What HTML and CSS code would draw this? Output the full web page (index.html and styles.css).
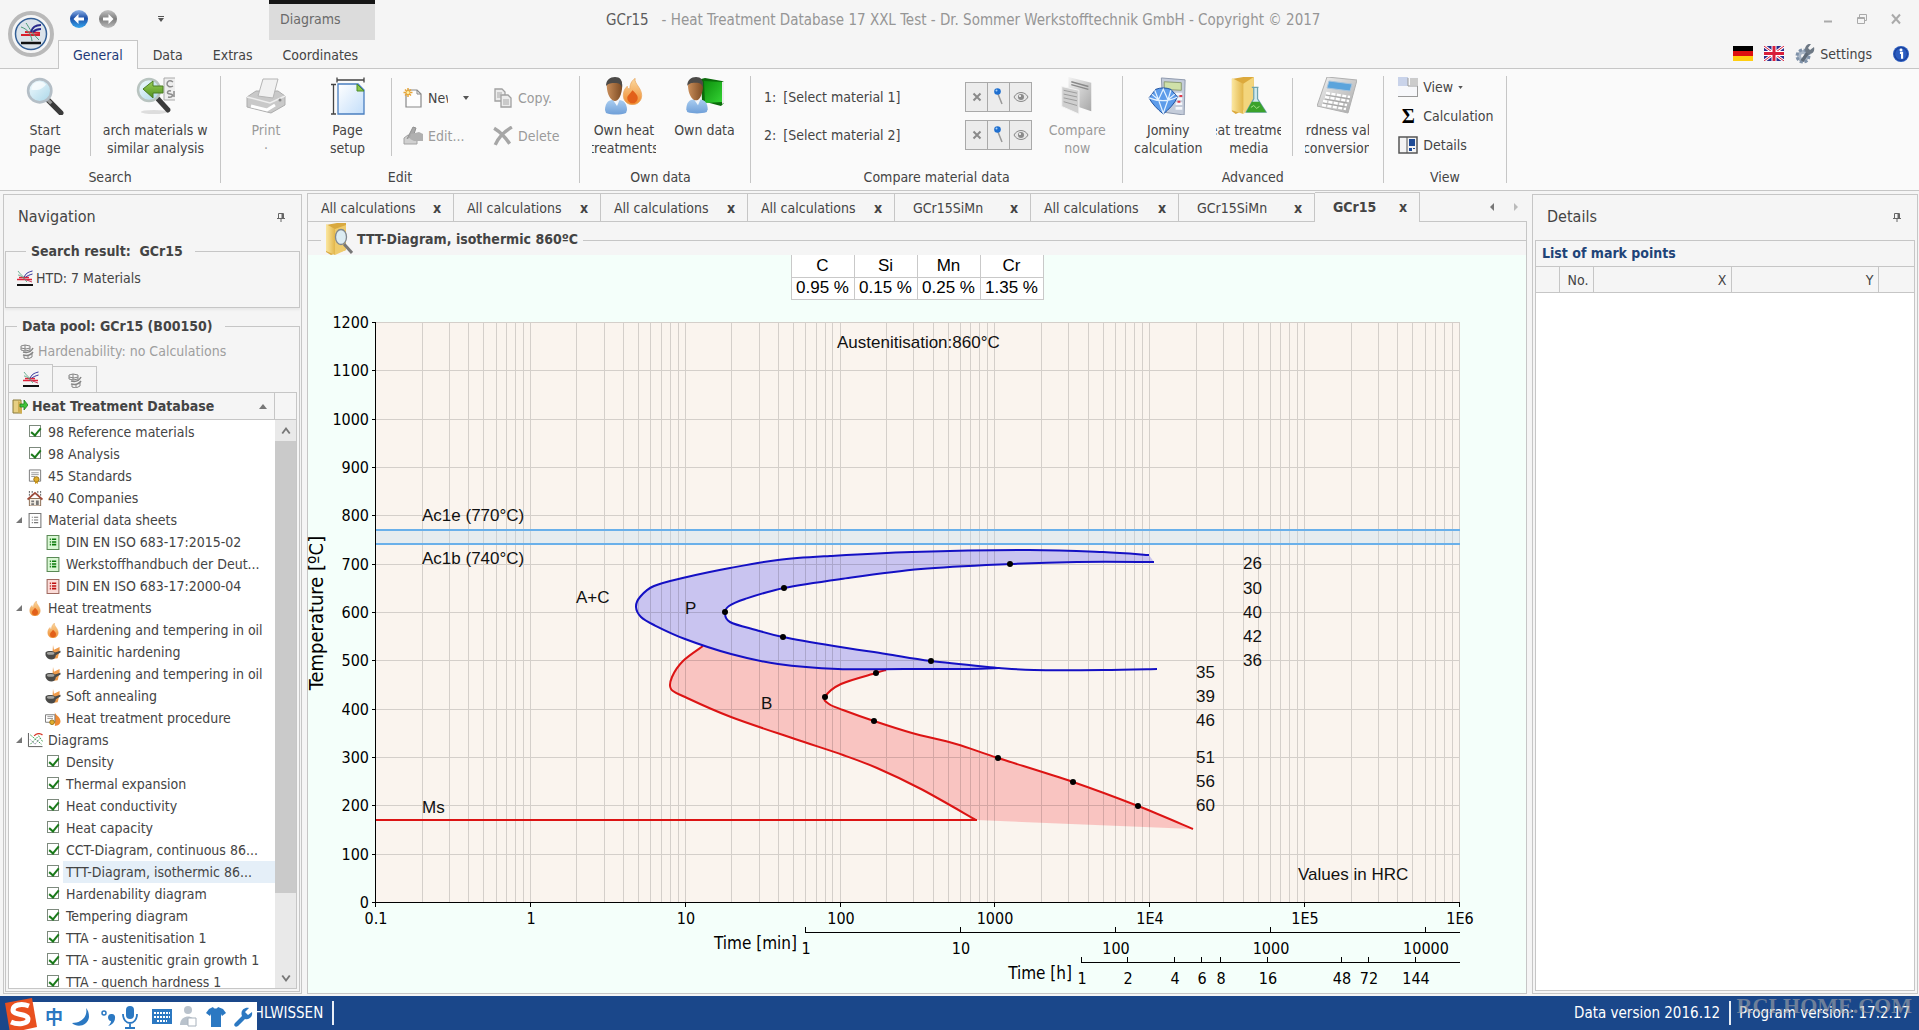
FILE: index.html
```html
<!DOCTYPE html>
<html lang="en">
<head>
<meta charset="utf-8">
<title>GCr15 - Heat Treatment Database 17 XXL Test</title>
<link rel="stylesheet" href="styles.css">
</head>
<body>
<svg class="sprite" aria-hidden="true">
  <defs>
    <linearGradient id="gBlue" x1="0" y1="0" x2="0" y2="1"><stop offset="0" stop-color="#8fb4e8"/><stop offset=".45" stop-color="#1d4fa8"/><stop offset="1" stop-color="#35a6ee"/></linearGradient>
    <linearGradient id="gGrey" x1="0" y1="0" x2="0" y2="1"><stop offset="0" stop-color="#c4c4c4"/><stop offset=".5" stop-color="#7d7d7d"/><stop offset="1" stop-color="#bdbdbd"/></linearGradient>
    <linearGradient id="gLens" x1="0" y1="0" x2="1" y2="1"><stop offset="0" stop-color="#f4fcff"/><stop offset="1" stop-color="#a9d6e8"/></linearGradient>
    <linearGradient id="gPage" x1="0" y1="0" x2="1" y2="1"><stop offset="0" stop-color="#ffffff"/><stop offset="1" stop-color="#c3defa"/></linearGradient>
    <linearGradient id="gFlame" x1="0" y1="0" x2="0" y2="1"><stop offset="0" stop-color="#fbd9a0"/><stop offset="1" stop-color="#f08a2c"/></linearGradient>
    <linearGradient id="gFace" x1="0" y1="0" x2="1" y2="0"><stop offset="0" stop-color="#c98e5a"/><stop offset="1" stop-color="#7c4a22"/></linearGradient>
    <linearGradient id="gShirt" x1="0" y1="0" x2="0" y2="1"><stop offset="0" stop-color="#a9cdf0"/><stop offset="1" stop-color="#6f9fd8"/></linearGradient>
    <linearGradient id="gBook" x1="0" y1="0" x2="1" y2="1"><stop offset="0" stop-color="#0c8f0c"/><stop offset="1" stop-color="#35d435"/></linearGradient>
    <linearGradient id="gFolder" x1="0" y1="0" x2="1" y2="0"><stop offset="0" stop-color="#fbe7a0"/><stop offset="1" stop-color="#e2b64a"/></linearGradient>
    <linearGradient id="gSteel" x1="0" y1="0" x2="1" y2="1"><stop offset="0" stop-color="#f2f2f2"/><stop offset="1" stop-color="#a8a8a8"/></linearGradient>
    <linearGradient id="gArrow" x1="0" y1="0" x2="0" y2="1"><stop offset="0" stop-color="#9bd05a"/><stop offset="1" stop-color="#4f8f1c"/></linearGradient>
  </defs>
  <symbol id="i-htd" viewBox="0 0 16 16"><rect x="0" y="14" width="16" height="2" fill="#111"/><path d="M0 9.500h15M2 7.500h10" stroke="#e0243c" stroke-width="1.300"/><path d="M1 1c2 3 5 5 8 9M1 5c3 0 6 4 9 7" stroke="#4aa07a" stroke-width=".8" fill="none"/><path d="M15.500 1C11 2 8 4 7.500 7M15.500 4C12 5 10 6 9 7" stroke="#33339c" fill="none"/><path d="M7 9l8 3" stroke="#c84060" fill="none"/></symbol>
  <symbol id="i-hard" viewBox="0 0 16 16"><g fill="none" stroke="#858585"><path d="M2 3l4-1 5 1v4l-5 1-4-1zM6 2v6M2 5l5 1 4-1"/><path d="M4 9c4 1 8 0 10-4M4 12c4 1 8 0 10-3" stroke-width="1.500"/><path d="M5 13v2l4 1 4-2v-3M9 13v3"/></g></symbol>
  <symbol id="i-lens" viewBox="0 0 36 36"><path d="M21 22l12 12" stroke="#3b3b3b" stroke-width="5" stroke-linecap="round"/><path d="M20 21l4 4" stroke="#9a9a9a" stroke-width="3"/><circle cx="13" cy="13" r="11" fill="url(#gLens)" stroke="#b4bec6" stroke-width="2.500"/><path d="M5 12a8 8 0 0 1 14-5c-4 5-8 6-14 5z" fill="#fff" opacity=".7"/></symbol>
  <symbol id="i-similar" viewBox="0 0 40 38"><ellipse cx="18" cy="35" rx="13" ry="2" fill="#ddd"/><path d="M39 1H28v22h11" fill="#eee" stroke="#aaa"/><path d="M37 5c-4-3-6 0-6 2s3 4 6 2M35 14c-4-1-5 3-1 3s3 4-2 3M38 14v6" stroke="#8c8c8c" stroke-width="1.500" fill="none"/><path d="M22 22l10 11" stroke="#3b3b3b" stroke-width="5" stroke-linecap="round"/><circle cx="13" cy="13" r="11" fill="url(#gLens)" stroke="#b9c4c0" stroke-width="2.500"/><path d="M7 12l10-8v5h10v7H17v5z" fill="url(#gArrow)" stroke="#4a7d22"/></symbol>
  <symbol id="i-print" viewBox="0 0 40 36"><path d="M1 19l9-6h22l7 5v9l-14 8L1 29z" fill="#c9c9c9" stroke="#adadad"/><path d="M1 19l23 6 15-7" stroke="#eee" fill="none" stroke-width="1.500"/><path d="M12 18L17 1h15l-5 19z" fill="#f1f1f1" stroke="#b5b5b5"/><path d="M5 28l16 4 8-5" stroke="#fff" stroke-width="3" fill="none"/><circle cx="34" cy="22" r="1.500" fill="#888"/></symbol>
  <symbol id="i-setup" viewBox="0 0 34 38"><path d="M6 3h27M6 .500v5M33 .500v5M2.500 7v30M0 7.500h5M0 37h5" stroke="#444" stroke-width="1.300"/><path d="M7 7h20l6 6v24H7z" fill="url(#gPage)" stroke="#4a7fc0" stroke-width="1.300"/><path d="M26 7v7h7z" fill="#8dc84a" stroke="#4a8a2a"/></symbol>
  <symbol id="i-new" viewBox="0 0 18 20"><path d="M4 2h9l4 4v13H2V6z" fill="#fdfdfd" stroke="#888" stroke-width="1.200"/><path d="M13 2v4h4" fill="none" stroke="#888"/><path d="M4 0v9M-.500 4.500h9M1 1.500l6 6M7 1.500l-6 6" stroke="#e8a63a" stroke-width="1.500"/><circle cx="4" cy="4.500" r="1.500" fill="#fff2a8"/></symbol>
  <symbol id="i-copy" viewBox="0 0 18 20"><g fill="#ececec" stroke="#a0a0a0" stroke-width="1.300"><path d="M1 1h7l3 3v9H1z"/><path d="M7 7h7l3 3v9H7z"/></g><path d="M3 5h5M3 7h4M3 9h4M9 12h6M9 14h6M9 16h6" stroke="#a8a8a8"/></symbol>
  <symbol id="i-edit" viewBox="0 0 20 20"><path d="M1 12l4-3 9 2v7H1z" fill="#d0d0d0" stroke="#a2a2a2"/><path d="M4 13L10 1l3 1-3 9" fill="#a8a8a8" stroke="#909090"/><path d="M8 8l8-2 4 2v7h-9l-4-2z" fill="#b0b0b0"/></symbol>
  <symbol id="i-del" viewBox="0 0 18 18"><path d="M1 2c5 3 10 8 14 14M17 1C10 5 5 10 2 17" stroke="#a6a6a6" stroke-width="3" fill="none"/></symbol>
  <symbol id="i-person" viewBox="0 0 24 38"><path d="M1 33c0-6 3-10 7-10h7c5 0 8 4 8 10l-1 3c-6 2-14 2-20 0z" fill="url(#gShirt)"/><path d="M9 23l4 6 3-7z" fill="#f2f6fb"/><path d="M3 12C2 5 5 1 11 1s8 4 7 11c-1 8-4 12-7 12s-7-4-8-12z" fill="url(#gFace)"/><path d="M2 9C2 3 6 0 11 0c5 0 8 3 7 11-1-4-3-5-7-5-4 0-6 0-9 3z" fill="#4c4a48"/></symbol>
  <symbol id="i-ownheat" viewBox="0 0 40 38"><use href="#i-person" width="24" height="38"/><use href="#i-flame" x="18" y="1" width="21" height="27"/></symbol>
  <symbol id="i-owndata" viewBox="0 0 40 38"><path d="M16 2l4-1 17 3 2 1v21l-3 3-19-5z" fill="#0a6b0a"/><path d="M19 4l18 1v20l-17 1z" fill="url(#gBook)"/><path d="M37 5l2 0v21l-2 1z" fill="#eee"/><use href="#i-person" width="24" height="37"/></symbol>
  <symbol id="i-flame" viewBox="0 0 16 20"><path d="M10 0c-1 4 5 7 5 13 0 4-3 7-7 7s-7-3-7-7c0-3 1-5 3-7 0 2 1 2 2 2 0-3 1-6 4-8z" fill="url(#gFlame)" stroke="#e9a862" stroke-width=".6"/><path d="M8 9c3 3 4 4 4 6a4 4 0 0 1-8 0c0-2 2-3 4-6z" fill="#e2601a"/></symbol>
  <symbol id="i-x" viewBox="0 0 10 10"><path d="M1.500 1.500l7 7M8.500 1.500l-7 7" stroke="#8a8a8a" stroke-width="2"/></symbol>
  <symbol id="i-pin" viewBox="0 0 10 18"><path d="M4 6l4 10" stroke="#999" stroke-width="1.500"/><circle cx="3.500" cy="3.500" r="3.300" fill="#1f6fd0"/><circle cx="2.500" cy="2.500" r="1" fill="#a8d0f8"/></symbol>
  <symbol id="i-eye" viewBox="0 0 16 12"><path d="M1 6c3-6 11-6 14 0-3 6-11 6-14 0z" fill="#e6e6e6" stroke="#8a8a8a"/><circle cx="8" cy="6" r="3" fill="#8a8a8a"/><circle cx="7" cy="5" r="1" fill="#fff"/></symbol>
  <symbol id="i-compare" viewBox="0 0 32 40"><path d="M7 0l24 6v30L7 28z" fill="url(#gSteel)"/><path d="M10 5l18 5M10 8l18 5" stroke="#8a8a8a" stroke-width="1.500"/><path d="M0 10l18 4v25L0 31z" fill="#cfcfcf" stroke="#f4f4f4"/><path d="M2 14l14 3M2 18l14 3M2 22l14 3M2 26l14 4" stroke="#9a9a9a"/></symbol>
  <symbol id="i-jominy" viewBox="0 0 40 40"><path d="M13 1l25 2-1 37-22-3z" fill="#c4ccda" stroke="#8c97ab"/><path d="M16 5l18 1v8l-18-1z" fill="#cfe0a8" stroke="#8a9a70"/><path d="M28 18h7M28 23h7M28 28h7M28 33h7" stroke="#f5f7fb" stroke-width="3"/><path d="M32 20h3M30 26h3" stroke="#e03a4a" stroke-width="2"/><path d="M7 13c5-2 11-2 16 0l7 8c-3 7-9 13-15 18C9 34 3 28 0 22z" fill="#5d9cea" stroke="#1c4f9e"/><path d="M0 22c9 4 21 4 30-1M6 14l4 10 5-11 5 11 3-10M3 18l7 6M27 18l-7 6M10 24l5 14 5-14" stroke="#e4f2ff" stroke-width="1.300" fill="none"/></symbol>
  <symbol id="i-media" viewBox="0 0 38 40"><path d="M1 2L13 0h11v30L5 39 1 36z" fill="#dca93c"/><path d="M1 1l12 6v32L1 35z" fill="url(#gFolder)"/><path d="M13 7l11-7v30l-11 9z" fill="#f3d57c"/><path d="M22 11h7M24 11v12L16 37h21L28 23V11" fill="#cfeaf0" stroke="#6fa3ad" stroke-width="1.300"/><path d="M22 26h8l7 11H16z" fill="#3aa22a"/><path d="M21 32l3-2 3 3 3-2" stroke="#a6e48c" fill="none"/></symbol>
  <symbol id="i-calc" viewBox="0 0 40 38"><path d="M10 0l30 3-9 33L0 29z" fill="url(#gSteel)" stroke="#b0b0b0"/><path d="M12 4l23 3-2 7-23-3z" fill="#5ba4dc" stroke="#a8c4dc"/><path d="M9 16l24 4M8 20l24 4M6 24l24 4M5 28l24 4" stroke="#fff" stroke-width="2.500" stroke-dasharray="4 1.500"/><path d="M9 18l24 4M8 22l22 4M6 26l22 4" stroke="#9b9b9b" stroke-width=".8"/></symbol>
  <symbol id="i-view" viewBox="0 0 20 20"><path d="M0 0h20v20H0z" fill="#f7f8fb"/><path d="M0 0h10v9H0z" fill="#c9d3ea"/><path d="M10 1v8h10M0 19.500h20M19.500 9v11" stroke="#999" fill="none"/><path d="M12 1h8v7h-8z" fill="#ccc"/></symbol>
  <symbol id="i-panel" viewBox="0 0 20 18"><path d="M1 1h18v16H1z" fill="#f4f4f4" stroke="#555" stroke-width="1.500"/><path d="M9 1v16" stroke="#555"/><path d="M11 3h6v7h-6zM11 12h3v3h-3zM15 12h2v1h-2z" fill="#1f4b96"/></symbol>
  <symbol id="i-back" viewBox="0 0 18 18"><circle cx="9" cy="9" r="9" fill="url(#gBlue)"/><path d="M3.500 9l5-5v3.500H14v3H8.500V14z" fill="#fff"/></symbol>
  <symbol id="i-fwd" viewBox="0 0 18 18"><circle cx="9" cy="9" r="9" fill="url(#gGrey)"/><path d="M14.500 9l-5-5v3.500H4v3h5.500V14z" fill="#fff"/></symbol>
  <symbol id="i-tri" viewBox="0 0 6 4"><path d="M0 0h6L3 4z" fill="#555"/></symbol>
  <symbol id="i-custom" viewBox="0 0 6 6"><path d="M0 0h6v1H0zM0 2h6L3 6z" fill="#555"/></symbol>
  <symbol id="i-de" viewBox="0 0 20 15"><path d="M0 0h20v5H0z"/><path d="M0 5h20v5H0z" fill="#dd1010"/><path d="M0 10h20v5H0z" fill="#ffce10"/></symbol>
  <symbol id="i-uk" viewBox="0 0 20 15"><path d="M0 0h20v15H0z" fill="#2b2d8c"/><path d="M0 0l20 15M20 0L0 15" stroke="#fff" stroke-width="3"/><path d="M0 0l20 15M20 0L0 15" stroke="#d81e3a"/><path d="M10 0v15M0 7.500h20" stroke="#fff" stroke-width="5"/><path d="M10 0v15M0 7.500h20" stroke="#d81e3a" stroke-width="3"/></symbol>
  <symbol id="i-gear" viewBox="0 0 20 20"><circle cx="8" cy="12" r="6" fill="#a9b6c6" stroke="#7f92a9" stroke-width="3" stroke-dasharray="3 1.700"/><circle cx="8" cy="12" r="2" fill="#f5f5f5"/><path d="M7 17L14 7" stroke="#5f6b78" stroke-width="3.500"/><path d="M10 5c0-3 3-6 6-5l-3 4 2 2 4-3c1 4-1 7-4 7-3 0-5-2-5-5z" fill="#6d7884"/></symbol>
  <symbol id="i-info" viewBox="0 0 15 15"><circle cx="7.500" cy="7.500" r="7.500" fill="#2a5cc0"/><circle cx="7.500" cy="7.500" r="6" fill="none" stroke="#1a3f98"/><circle cx="7.500" cy="3.800" r="1.400" fill="#fff"/><path d="M6.500 6.500h2v5.500" stroke="#fff" stroke-width="2" fill="none"/></symbol>
  <symbol id="i-push" viewBox="0 0 8 9"><path d="M1.500.500h5v5h-5zM0 5.500h8M4 6v3" stroke="#666" fill="none"/><path d="M4.500 1h2v4h-2z" fill="#666"/></symbol>
  <symbol id="i-db" viewBox="0 0 16 16"><path d="M1 2h8v13H1z" fill="#e7cf82" stroke="#8a7a3a"/><path d="M6 3l4 2v11l-4-2z" fill="#cfae52"/><path d="M8 6h4V2l4 5-4 5V9H8z" fill="#3fc43a" stroke="#1f7d1f" stroke-width=".8"/></symbol>
  <symbol id="i-std" viewBox="0 0 14 16"><path d="M1 1h12v12H1z" fill="#fdfdfd" stroke="#777"/><path d="M3 4h8M3 6h8M3 8h4" stroke="#999"/><circle cx="8.500" cy="11" r="2.800" fill="#e0ad2c" stroke="#9a7314"/><path d="M7 13v3l1.500-1L10 16v-3z" fill="#c9951c"/></symbol>
  <symbol id="i-comp" viewBox="0 0 16 16"><path d="M2 8h12v8H2z" fill="#f4efe6" stroke="#8a6a50"/><path d="M0 9l8-7 8 7" stroke="#a04a38" stroke-width="2" fill="none"/><path d="M2 0v6M5 0v4M11 0v4M14 0v6" stroke="#555" stroke-dasharray="2 1"/><path d="M4 10h3v2H4zM9 10h3v5H9zM4 13h3v2H4z" fill="#777"/></symbol>
  <symbol id="i-sheet" viewBox="0 0 12 14"><path d="M.500.500h11v13H.500z" fill="#fff" stroke="#777"/><path d="M3 4h1M5 4h4M3 6.500h1M5 6.500h4M3 9h1M5 9h4" stroke="#777"/></symbol>
  <symbol id="i-sheetg" viewBox="0 0 12 14"><path d="M.500.500h11v13H.500z" fill="#d9f7d4" stroke="#5a8a55"/><path d="M3 4h1M5 4h4M3 6.500h1M5 6.500h4M3 9h1M5 9h4" stroke="#0a7a0a" stroke-width="1.500"/></symbol>
  <symbol id="i-sheetr" viewBox="0 0 12 14"><path d="M.500.500h11v13H.500z" fill="#fbdcd8" stroke="#a06a60"/><path d="M3 4h1M5 4h4M3 6.500h1M5 6.500h4M3 9h1M5 9h4" stroke="#c01010" stroke-width="1.500"/></symbol>
  <symbol id="i-pot" viewBox="0 0 16 16"><path d="M8 0l1 5 6-3v4l-2 8-6 1z" fill="#ee9a4a"/><path d="M0 8c2-2 8-2 10 0l6-2v2l-5 3c0 6-9 6-11 0z" fill="#4a4a48"/><ellipse cx="5.500" cy="9" rx="4" ry="1.500" fill="#a4a4a0"/></symbol>
  <symbol id="i-proc" viewBox="0 0 16 16"><path d="M10 1c0 3 6 5 6 10 0 3-3 5-6 5z" fill="#ee8a34"/><path d="M0 4h10v8H0z" fill="#fff" stroke="#777"/><path d="M2 6h6M2 8h6" stroke="#999"/><circle cx="7" cy="12" r="2.500" fill="#e0ad2c" stroke="#9a7314"/></symbol>
  <symbol id="i-diag" viewBox="0 0 16 16"><path d="M1 0v14.500h15" stroke="#555" fill="none"/><path d="M7 3c3-3 6-3 9-1" stroke="#d83a2a" fill="none" stroke-width="1.300"/><path d="M3 2l12 10M3 12l9-9 4 6" stroke="#3b9a4a" fill="none" stroke-dasharray="2 1"/><path d="M3 7l5 5 5-6" stroke="#557" fill="none" stroke-dasharray="1 1"/></symbol>
  <symbol id="i-exp" viewBox="0 0 6 6"><path d="M6 0v6H0z" fill="#777"/></symbol>
  <symbol id="i-sort" viewBox="0 0 8 5"><path d="M4 0l4 5H0z" fill="#777"/></symbol>
  <symbol id="i-chev" viewBox="0 0 8 8"><path d="M1 6l3-4 3 4" stroke="#777" stroke-width="1.500" fill="none"/></symbol>
  <symbol id="i-chevd" viewBox="0 0 8 8"><path d="M1 2l3 4 3-4" stroke="#777" stroke-width="1.500" fill="none"/></symbol>
  <symbol id="i-folder" viewBox="0 0 28 32"><path d="M1 2L12 0h9v27L6 32l-5-3z" fill="#d9a93f"/><path d="M1 1l9 5v26l-9-4z" fill="url(#gFolder)"/><path d="M10 6l11-4v25l-11 5z" fill="#eecb6c"/><path d="M19 21l8 9" stroke="#777" stroke-width="3"/><ellipse cx="16" cy="14" rx="5.500" ry="7.500" fill="#dcecf2" stroke="#808890" stroke-width="1.300"/></symbol>
</svg>

<header class="top">
  <button class="logo" aria-label="Application menu">
    <svg viewBox="0 0 46 46"><circle cx="23" cy="23" r="21" fill="#f6f6f6" stroke="#b9b9b9" stroke-width="4"/><circle cx="23" cy="23" r="15.500" fill="#dbe3ea" stroke="#335f96" stroke-width="1.500"/><path d="M13 32h20" stroke="#111" stroke-width="2.500"/><path d="M13 24h19M17 21l15 1" stroke="#d81e2e" stroke-width="2.200"/><path d="M13 16c6 2 10 6 11 14M18 12c3 4 4 8 13 17" stroke="#4a9a78" fill="none"/><path d="M33 14c-7 0-9 3-10 7M33 18c-4 0-6 1-8 3" stroke="#29298c" stroke-width="2" fill="none"/></svg>
  </button>
  <div class="titlebar">
    <div class="quick">
      <button aria-label="Back"><svg class="s18"><use href="#i-back"/></svg></button>
      <button aria-label="Forward"><svg class="s18"><use href="#i-fwd"/></svg></button>
      <button class="customize" aria-label="Customize toolbar"><svg class="s6"><use href="#i-custom"/></svg></button>
    </div>
    <div class="context">Diagrams</div>
    <h1><span class="doc">GCr15</span>- Heat Treatment Database 17 XXL Test - Dr. Sommer Werkstofftechnik GmbH - Copyright © 2017</h1>
    <div class="winctl">
      <button aria-label="Minimize"><svg viewBox="0 0 12 12"><path d="M2 8.500h8" stroke="#aaa" stroke-width="2"/></svg></button>
      <button aria-label="Restore"><svg viewBox="0 0 12 12"><path d="M3.500 4V1.500h7v6H8.500M1.500 4.500h7v6h-7zM1 5.500h7" stroke="#aaa" fill="none"/></svg></button>
      <button aria-label="Close"><svg viewBox="0 0 12 12"><path d="M2 1.500l8 9M10 1.500l-8 9" stroke="#aaa" stroke-width="2"/></svg></button>
    </div>
  </div>
  <div class="tabrow">
    <nav class="tabs">
      <button class="tab on">General</button><button class="tab">Data</button><button class="tab">Extras</button><button class="tab">Coordinates</button>
    </nav>
    <div class="tools">
      <button aria-label="Deutsch"><svg class="flag"><use href="#i-de"/></svg></button>
      <button aria-label="English"><svg class="flag"><use href="#i-uk"/></svg></button>
      <button class="settings"><svg class="s20"><use href="#i-gear"/></svg>Settings</button>
      <button aria-label="Info"><svg class="s16"><use href="#i-info"/></svg></button>
    </div>
  </div>
</header>

<section class="ribbon">
  <div class="group">
    <div class="items">
      <button class="big w90"><svg><use href="#i-lens"/></svg><span>Start</span><span>page</span></button>
      <i class="sep"></i>
      <button class="big w128"><svg><use href="#i-similar"/></svg><span>Search materials with</span><span>similar analysis</span></button>
    </div>
    <h2>Search</h2>
  </div>
  <div class="group">
    <div class="items">
      <button class="big w90 off" disabled><svg><use href="#i-print"/></svg><span>Print</span><span>·</span></button>
      <button class="big w72"><svg><use href="#i-setup"/></svg><span>Page</span><span>setup</span></button>
      <i class="sep gapl"></i>
      <div class="smallgrid">
        <button class="small"><svg><use href="#i-new"/></svg><span class="cut">New</span><svg class="s6"><use href="#i-tri"/></svg></button>
        <button class="small off" disabled><svg><use href="#i-copy"/></svg>Copy.</button>
        <button class="small off" disabled><svg><use href="#i-edit"/></svg>Edit...</button>
        <button class="small off" disabled><svg><use href="#i-del"/></svg>Delete</button>
      </div>
    </div>
    <h2>Edit</h2>
  </div>
  <div class="group own">
    <div class="items">
      <button class="big w88"><svg><use href="#i-ownheat"/></svg><span>Own heat</span><span>treatments</span></button>
      <button class="big w72"><svg><use href="#i-owndata"/></svg><span>Own data</span></button>
    </div>
    <h2>Own data</h2>
  </div>
  <div class="group">
    <div class="items">
      <div class="picks">
        <div class="pick"><span>1:</span><span class="sel">[Select material 1]</span><div class="seg"><button aria-label="Clear material 1"><svg class="s10"><use href="#i-x"/></svg></button><button aria-label="Pin material 1"><svg class="pinic"><use href="#i-pin"/></svg></button><button aria-label="Show material 1"><svg class="s16"><use href="#i-eye"/></svg></button></div></div>
        <div class="pick"><span>2:</span><span class="sel">[Select material 2]</span><div class="seg"><button aria-label="Clear material 2"><svg class="s10"><use href="#i-x"/></svg></button><button aria-label="Pin material 2"><svg class="pinic"><use href="#i-pin"/></svg></button><button aria-label="Show material 2"><svg class="s16"><use href="#i-eye"/></svg></button></div></div>
      </div>
      <button class="big w90 off" disabled><svg><use href="#i-compare"/></svg><span>Compare</span><span>now</span></button>
    </div>
    <h2>Compare material data</h2>
  </div>
  <div class="group adv">
    <div class="items">
      <button class="big w88 roomy"><svg><use href="#i-jominy"/></svg><span>Jominy</span><span>calculation</span></button>
      <button class="big w72"><svg><use href="#i-media"/></svg><span>Heat treatment</span><span>media</span></button>
      <i class="sep gapl"></i>
      <button class="big w88"><svg><use href="#i-calc"/></svg><span>Hardness value</span><span>conversion</span></button>
    </div>
    <h2>Advanced</h2>
  </div>
  <div class="group">
    <div class="items stack">
      <button class="small"><svg><use href="#i-view"/></svg>View<svg class="s5"><use href="#i-tri"/></svg></button>
      <button class="small"><b class="sigma">Σ</b>Calculation</button>
      <button class="small"><svg><use href="#i-panel"/></svg>Details</button>
    </div>
    <h2>View</h2>
  </div>
</section>

<main>
  <aside class="panel nav">
    <div class="phead"><h2>Navigation</h2><button aria-label="Auto hide"><svg class="push"><use href="#i-push"/></svg></button></div>
    <fieldset class="result">
      <legend>Search result:&nbsp; GCr15</legend>
      <a href="#materials"><svg class="s16"><use href="#i-htd"/></svg>HTD: 7 Materials</a>
    </fieldset>
    <fieldset class="pool">
      <legend>Data pool: GCr15 (B00150)</legend>
      <div class="hardn"><svg class="s16"><use href="#i-hard"/></svg>Hardenability: no Calculations</div>
      <div class="ptabs"><button class="on" aria-label="Heat Treatment Database"><svg class="s16"><use href="#i-htd"/></svg></button><button aria-label="Hardenability"><svg class="s16"><use href="#i-hard"/></svg></button></div>
      <div class="treehead"><button><svg class="s16"><use href="#i-db"/></svg>Heat Treatment Database<svg class="sort"><use href="#i-sort"/></svg></button><span></span></div>
      <div class="treebox">
        <ul class="tree">
          <li><label><input type="checkbox" checked>98 Reference materials</label></li>
          <li><label><input type="checkbox" checked>98 Analysis</label></li>
          <li><svg class="s16"><use href="#i-std"/></svg>45 Standards</li>
          <li><svg class="s16"><use href="#i-comp"/></svg>40 Companies</li>
          <li class="open"><svg class="s6"><use href="#i-exp"/></svg><svg class="s16"><use href="#i-sheet"/></svg>Material data sheets</li>
          <li class="sub"><svg class="s16"><use href="#i-sheetg"/></svg>DIN EN ISO 683-17:2015-02</li>
          <li class="sub"><svg class="s16"><use href="#i-sheetg"/></svg>Werkstoffhandbuch der Deut...</li>
          <li class="sub"><svg class="s16"><use href="#i-sheetr"/></svg>DIN EN ISO 683-17:2000-04</li>
          <li class="open"><svg class="s6"><use href="#i-exp"/></svg><svg class="s16"><use href="#i-flame"/></svg>Heat treatments</li>
          <li class="sub"><svg class="s16"><use href="#i-flame"/></svg>Hardening and tempering in oil</li>
          <li class="sub"><svg class="s16"><use href="#i-pot"/></svg>Bainitic hardening</li>
          <li class="sub"><svg class="s16"><use href="#i-pot"/></svg>Hardening and tempering in oil</li>
          <li class="sub"><svg class="s16"><use href="#i-pot"/></svg>Soft annealing</li>
          <li class="sub"><svg class="s16"><use href="#i-proc"/></svg>Heat treatment procedure</li>
          <li class="open"><svg class="s6"><use href="#i-exp"/></svg><svg class="s16"><use href="#i-diag"/></svg>Diagrams</li>
          <li class="sub"><label><input type="checkbox" checked>Density</label></li>
          <li class="sub"><label><input type="checkbox" checked>Thermal expansion</label></li>
          <li class="sub"><label><input type="checkbox" checked>Heat conductivity</label></li>
          <li class="sub"><label><input type="checkbox" checked>Heat capacity</label></li>
          <li class="sub"><label><input type="checkbox" checked>CCT-Diagram, continuous 86...</label></li>
          <li class="sub current"><label><input type="checkbox" checked>TTT-Diagram, isothermic 86...</label></li>
          <li class="sub"><label><input type="checkbox" checked>Hardenability diagram</label></li>
          <li class="sub"><label><input type="checkbox" checked>Tempering diagram</label></li>
          <li class="sub"><label><input type="checkbox" checked>TTA - austenitisation 1</label></li>
          <li class="sub"><label><input type="checkbox" checked>TTA - austenitic grain growth 1</label></li>
          <li class="sub"><label><input type="checkbox" checked>TTA - quench hardness 1</label></li>
        </ul>
        <div class="scroll"><button aria-label="Scroll up"><svg class="s8"><use href="#i-chev"/></svg></button><div class="rail"><div class="thumb"></div></div><button aria-label="Scroll down"><svg class="s8"><use href="#i-chevd"/></svg></button></div>
      </div>
    </fieldset>
  </aside>

  <section class="work">
    <nav class="docs">
      <button>All calculations<b>x</b></button><button>All calculations<b>x</b></button><button>All calculations<b>x</b></button><button>All calculations<b>x</b></button><button class="name">GCr15SiMn<b>x</b></button><button>All calculations<b>x</b></button><button class="name">GCr15SiMn<b>x</b></button><button class="on">GCr15<b>x</b></button>
      <span class="pager"><svg viewBox="0 0 4 8"><path d="M4 0v8L0 4z" fill="#777"/></svg><svg viewBox="0 0 4 8"><path d="M0 0v8l4-4z" fill="#bbb"/></svg></span>
    </nav>
    <div class="sheet">
      <div class="caption"><svg><use href="#i-folder"/></svg><h2>TTT-Diagram, isothermic 860ºC</h2></div>
      <div class="diagram">
        <table class="analysis">
          <thead><tr><th>C</th><th>Si</th><th>Mn</th><th>Cr</th></tr></thead>
          <tbody><tr><td>0.95 %</td><td>0.15 %</td><td>0.25 %</td><td>1.35 %</td></tr></tbody>
        </table>
        <svg id="chart" viewBox="0 0 1218 690" preserveAspectRatio="xMidYMin meet" role="img" aria-label="TTT diagram"></svg>
      </div>
    </div>
  </section>

  <aside class="panel details">
    <div class="phead"><h2>Details</h2><button aria-label="Auto hide"><svg class="push"><use href="#i-push"/></svg></button></div>
    <div class="marks">
      <h3>List of mark points</h3>
      <table>
        <colgroup><col class="c1"><col class="c2"><col class="c3"><col><col class="c5"></colgroup>
        <thead><tr><th></th><th>No.</th><th>X</th><th>Y</th><th></th></tr></thead>
      </table>
    </div>
  </aside>
</main>

<footer>
  <span class="owner">STAHLWISSEN</span>
  <span class="ver">Data version 2016.12</span><span class="ver">Program version: 17.2.17</span>
  <div class="ime">
    <svg viewBox="0 0 224 32" aria-hidden="true">
      <g fill="#2b78c2" stroke="none">
        <path d="M22 8c2 8-4 15-14 15 5 5 16 3 17-6 0-4-1-7-3-9z"/>
        <path d="M44 17a3.500 3.500 0 0 1 7 1c0 4-3 7-7 8 2-2 3-3 3-5-2 0-3-2-3-4z"/>
        <rect x="62" y="6" width="8" height="13" rx="4"/><path d="M88 9h20v15H88z"/>
        <path d="M149 8l4-2c1 2 4 2 5 0l5 2 3 4-4 3-1-2v13h-10V13l-1 2-4-3z" transform="translate(-4 1)"/>
        <path d="M172 23l7-7c-2-5 2-9 7-8l-4 4 3 3 4-3c1 5-3 8-7 7l-7 7c-3 2-5-1-3-3z" transform="translate(-1 0)"/>
      </g>
      <path d="M59 14c0 12 14 12 14 0M66 23v5M61 28h10" stroke="#2b78c2" stroke-width="1.800" fill="none"/>
      <circle cx="40" cy="13" r="2" fill="none" stroke="#2b78c2" stroke-width="1.500"/>
      <path d="M90 13h16M90 17h16M93 21h10" stroke="#fff" stroke-width="2" stroke-dasharray="2 1"/>
      <g fill="#b9c2cc"><circle cx="124" cy="10" r="4"/><path d="M116 25c0-11 15-11 15-2v2z"/></g><path d="M124 18h8v8h-8z" fill="#fff" stroke="#a8b2bd"/>
    </svg>
    <span class="zh">中</span>
    <svg class="sogou" viewBox="0 0 34 34" aria-hidden="true"><path d="M2 5L29 0l5 29-27 6z" fill="#e9501f"/><path d="M26 8c-8-3-16-1-16 4 0 6 15 3 15 9 0 5-10 6-17 3" stroke="#fff" stroke-width="5" fill="none"/></svg>
  </div>
  <div class="mark">RCLHOME.COM</div>
</footer>
<script src="chart.js"></script>
</body>
</html>
```
FILE: styles.css
```css
* { box-sizing: border-box; }
html, body { height: 100%; }
body {
  margin: 0; display: flex; flex-direction: column; min-height: 100vh; overflow: hidden;
  background: #f5f5f5; color: #444;
  font: 14px/18px "DejaVu Sans Condensed", "DejaVu Sans", sans-serif; font-stretch: condensed;
}
button { font: inherit; color: inherit; background: none; border: 0; padding: 0; margin: 0; display: flex; align-items: center; }
h1, h2, h3 { margin: 0; font: inherit; }
svg { display: block; flex: none; overflow: visible; }
.sprite { position: absolute; width: 0; height: 0; }
.s5 { width: 5px; height: 3px; } .s6 { width: 6px; height: 6px; } .s8 { width: 10px; height: 10px; }
.s10 { width: 10px; height: 10px; } .s16 { width: 16px; height: 16px; } .s18 { width: 18px; height: 18px; }
.s20 { width: 20px; height: 20px; } .flag { width: 20px; height: 15px; } .pinic { width: 10px; height: 18px; }
.push { width: 8px; height: 9px; }

/* title bar and ribbon tabs */
.top { position: relative; flex: none; height: 69px; border-bottom: 1px solid #c6c6c6; }
.logo { position: absolute; left: 8px; top: 11px; width: 46px; height: 46px; z-index: 1; }
.logo svg { width: 46px; height: 46px; }
.titlebar { display: grid; grid-template-columns: 269px 106px 1fr auto; height: 40px; align-items: start; }
.quick { display: flex; align-items: center; gap: 11px; height: 38px; padding-left: 70px; }
.customize { margin-left: 30px; }
.context { height: 40px; border-top: 4px solid #161616; background: #dcdcdc; color: #6a6a6a; padding: 6px 11px; }
.titlebar h1 { color: #969696; font-size: 15px; line-height: 40px; padding-left: 231px; white-space: nowrap; }
.doc { color: #5c5c5c; margin-right: 13px; }
.winctl { display: flex; gap: 22px; padding: 13px 17px 0 0; }
.winctl svg { width: 12px; height: 12px; }
.tabrow { display: flex; justify-content: space-between; height: 29px; padding-left: 58px; }
.tabs { display: flex; }
.tab { height: 29px; padding: 0 14px; justify-content: center; border: 1px solid transparent; border-bottom: 0; }
.tab.on { background: #fafafa; border-color: #c6c6c6; color: #1f3a78; min-width: 79px; }
.tools { display: flex; gap: 11px; align-items: center; padding: 0 10px 2px 0; }
.settings { gap: 5px; margin-right: 10px; }

.ribbon { flex: none; display: flex; height: 122px; background: #fafafa; border-bottom: 1px solid #c6c6c6; padding: 7px 0; }
.group { display: flex; flex-direction: column; justify-content: space-between; border-right: 1px solid #c6c6c6; height: 107px; }
.group h2 { text-align: center; line-height: 12px; }
.own { padding-right: 9px; }
.adv { padding: 0 2px 0 1px; }
.items { display: flex; height: 81px; }
.sep { width: 1px; height: 78px; margin-top: 2px; background: #c6c6c6; }
.gapl { margin-left: 7px; }
.big { display: flex; flex-direction: column; padding: 1px 12px 0; }
.w72 { width: 73px; padding: 1px 4px 0; } .w88 { width: 88px; } .w90 { width: 90px; } .w128 { width: 129px; }
.roomy { padding: 1px 8px 0; }
.big svg { width: 40px; height: 38px; margin-bottom: 6px; }
.big span { width: 100%; display: flex; justify-content: center; overflow: hidden; white-space: nowrap; line-height: 18px; }
.off { color: #9b9b9b; }
.smallgrid { display: grid; grid-template-columns: 90px 86px; grid-auto-rows: 38px; padding: 3px 0 0 11px; }
.small { gap: 5px; justify-content: flex-start; }
.small > svg:first-child { width: 20px; height: 20px; }
.cut { width: 20px; overflow: hidden; }
.cut + svg { margin-left: 10px; height: 4px; }
.picks { padding: 2px 0 0 13px; }
.pick { display: flex; align-items: center; height: 38px; gap: 7px; }
.sel { width: 175px; }
.seg { display: flex; border: 1px solid #a9a9a9; background: #ececec; height: 30px; }
.seg button { width: 21px; justify-content: center; }
.seg button + button { width: 22px; border-left: 1px solid #a9a9a9; }
.stack { flex-direction: column; justify-content: space-between; padding: 0 12px 0 14px; height: 80px; }
.stack .small { height: 22px; }
.sigma { width: 20px; text-align: center; font: bold 20px/20px "Liberation Serif", serif; color: #000; }

/* three-column work area */
main { flex: 1; min-height: 0; display: grid; grid-template-columns: 299px minmax(0, 1fr) 386px; gap: 5px; padding: 3px 1px 2px 3px; }
.panel { border: 1px solid #c6c6c6; display: flex; flex-direction: column; min-height: 0; }
.phead { display: flex; justify-content: space-between; align-items: center; height: 45px; padding: 0 16px 1px 14px; font-size: 16px; flex: none; }
fieldset { border: 1px solid #c6c6c6; margin: 0 1px; padding: 0; min-width: 0; }
legend { font-weight: bold; padding: 0 12px 0 5px; margin-left: 9px; line-height: 22px; }
.result { height: 68px; flex: none; padding: 5px 0 0 11px; margin-bottom: 7px; box-shadow: 0 2px 2px #e8e8e8; }
.result a { display: flex; gap: 3px; align-items: center; color: inherit; text-decoration: none; height: 22px; }
.pool { flex: 1; min-height: 0; display: flex; flex-direction: column; padding: 0 2px 2px; margin-bottom: 1px; }
.hardn { display: flex; align-items: center; gap: 3px; color: #9e9e9e; height: 27px; padding-left: 11px; flex: none; }
.ptabs { display: flex; align-items: flex-end; height: 28px; flex: none; }
.ptabs button { width: 44px; height: 26px; justify-content: center; border: 1px solid #c6c6c6; border-width: 1px 1px 0 0; }
.ptabs .on { width: 45px; height: 28px; border-left-width: 1px; }
.treehead { display: flex; height: 28px; flex: none; border: 1px solid #c6c6c6; }
.treehead button { flex: 1; font-weight: bold; gap: 4px; padding: 0 7px 0 3px; border-right: 1px solid #c6c6c6; }
.treehead span { width: 21px; }
.sort { width: 8px; height: 5px; margin-left: auto; }
.treebox { flex: 1; min-height: 0; display: flex; border: 1px solid #c6c6c6; border-top: 0; background: #fff; }
.tree { flex: 1; min-width: 0; margin: 0; padding: 1px 0 0; list-style: none; overflow: hidden; }
.tree li, .tree label { display: flex; align-items: center; height: 22px; gap: 5px; white-space: nowrap; }
.tree li { padding-left: 18px; }
.tree .open { padding-left: 7px; gap: 5px; }
.tree .sub { padding-left: 36px; }
.tree .current { background: linear-gradient(90deg, transparent 54px, #e5eff8 54px); }
.tree label { gap: 4px; }
.tree input { appearance: none; width: 12px; height: 12px; margin: 0 3px 2px 2px; border: 1px solid #7d8a7d; background: #fff; position: relative; }
.tree input:checked::after { content: ""; position: absolute; left: 3px; top: 0; width: 4px; height: 8px; border: solid #1a7a1a; border-width: 0 2px 2px 0; rotate: 40deg; }
.tree li > svg { height: 15px; }
.tree li > svg.s6 { height: 6px; }
.scroll { width: 21px; display: flex; flex-direction: column; background: #e9e9e9; }
.scroll button { height: 21px; justify-content: center; }
.rail { flex: 1; } .thumb { height: 86%; background: #cacaca; }

.work { display: flex; flex-direction: column; min-width: 0; min-height: 0; }
.docs { display: flex; align-items: flex-end; height: 29px; margin-top: -2px; flex: none; position: relative; }
.docs button { height: 28px; width: 147px; padding: 0 12px 0 13px; justify-content: space-between; border: 1px solid #c6c6c6; border-width: 1px 1px 0 0; }
.docs button:first-child { border-left-width: 1px; }
.docs .name { width: 136px; padding-left: 18px; }
.docs .name ~ button:not(.name):not(.on) { width: 148px; }
.docs .on { width: 105px; height: 30px; padding: 0 12px 2px 18px; font-weight: bold; background: #f5f5f5; margin-bottom: -1px; z-index: 1; }
.docs b { font-weight: bold; }
.pager { margin-left: auto; display: flex; gap: 20px; padding: 0 9px 10px 0; }
.pager svg { width: 4px; height: 8px; }
.sheet { flex: 1; min-height: 0; display: flex; flex-direction: column; border: 1px solid #c6c6c6; }
.caption { display: flex; align-items: center; gap: 4px; height: 33px; flex: none; font-weight: bold; }
.caption::before, .caption::after { content: ""; height: 1px; background: #c6c6c6; width: 13px; margin-top: 4px; }
.caption::after { flex: 1; margin-left: 1px; }
.caption svg { width: 28px; height: 32px; }
.diagram { flex: 1; min-height: 0; background: #f4fffa; display: flex; flex-direction: column; }
.analysis { margin: 0 auto; flex: none; border-collapse: collapse; background: #fff; color: #000; font: 17px/20px "Liberation Sans", sans-serif; }
.analysis th, .analysis td { width: 63px; padding: 0; text-align: center; font-weight: normal; border: 1px solid #c9c9c9; height: 22px; }
.analysis th { border-top: 0; line-height: 18px; }
#chart { flex: 1; min-height: 0; width: 100%; }

/* chart drawing */
.plot { fill: #faf4ee; }
.grid { stroke: #000; stroke-opacity: .15; fill: none; shape-rendering: crispEdges; }
.axis { stroke: #000; fill: none; shape-rendering: crispEdges; }
.num { font-size: 16px; fill: #000; }
.unit { font-size: 17px; fill: #000; text-anchor: end; }
.ann { font: 17px "Liberation Sans", sans-serif; fill: #111; }
.mid-t { text-anchor: middle; } .end-t { text-anchor: end; }
.ytitle { font-size: 20px; fill: #000; text-anchor: middle; }
.band { fill: #b9daf3; fill-opacity: .3; }
.ac { stroke: #6ab0ea; stroke-width: 2; shape-rendering: crispEdges; }
.p-area { fill: #645ff5; fill-opacity: .32; } .p-line { stroke: #1410c4; stroke-width: 2; fill: none; }
.b-area { fill: #fa5f62; fill-opacity: .32; } .b-line { stroke: #dc1414; stroke-width: 2; fill: none; }
.pt { fill: #000; }

.marks { flex: 1; min-height: 0; margin: 0 2px 2px; border: 1px solid #c6c6c6; background: #fff; }
.marks h3 { background: #f5f5f5; color: #1f4478; font-weight: bold; line-height: 25px; padding-left: 6px; }
.marks table { width: 100%; border-collapse: collapse; table-layout: fixed; background: #f5f5f5; }
.marks th { height: 26px; padding: 0 4px; font-weight: normal; text-align: right; border: 1px solid #c6c6c6; border-width: 1px 1px 1px 0; }
.marks th:last-child { border-right: 0; }
.c1 { width: 23px; } .c2 { width: 34px; } .c3 { width: 138px; } .c5 { width: 36px; }

/* status bar */
footer { position: relative; flex: none; height: 34px; display: flex; align-items: center; background: #1a478a; color: #fff; padding-right: 9px; font-size: 15px; }
.owner { padding: 3px 9px 3px 229px; border-right: 2px solid #e8eef6; margin-right: auto; }
.ver + .ver { margin-left: 9px; padding: 3px 0 3px 8px; border-left: 2px solid #e8eef6; }
.ime { position: absolute; left: 20px; bottom: 0; width: 237px; height: 28px; background: #fff; }
.ime svg { position: absolute; left: 44px; top: -2px; width: 224px; height: 32px; }
.ime .sogou { left: -17px; top: -4px; width: 34px; height: 34px; }
.zh { position: absolute; left: 25px; top: 4px; font: bold 18px/20px "Noto Sans CJK SC", sans-serif; color: #2b78c2; }
.mark { position: absolute; right: 7px; top: 0; font: bold 22px/20px "Liberation Serif", serif; color: #a5a5a5; opacity: .6; }
```
FILE: chart.js
```javascript
const chart = document.getElementById("chart");
const NS = "http://www.w3.org/2000/svg";
const left = 68, right = 1152, top0 = 22, bottom = 602;
const decade = (right - left) / 7;
const xOf = (seconds) => left + (Math.log10(seconds) + 1) * decade;
const yOf = (temp) => bottom - (temp * (bottom - top0)) / 1200;
const snap = (v) => Math.round(v) + 0.5;

function add(tag, cls, attrs, text) {
  const el = document.createElementNS(NS, tag);
  el.setAttribute("class", cls);
  for (const key in attrs) el.setAttribute(key, attrs[key]);
  if (text !== undefined) el.textContent = text;
  chart.appendChild(el);
}
const label = (cls, x, y, text) => add("text", cls, { x: Math.round(x), y: Math.round(y) }, text);

// Catmull-Rom spline through the measured points
function spline(pts) {
  let d = "";
  for (let i = 0; i < pts.length - 1; i++) {
    const a = pts[i - 1] || pts[i], b = pts[i], c = pts[i + 1], e = pts[i + 2] || c;
    d += `C${b[0] + (c[0] - a[0]) / 6} ${b[1] + (c[1] - a[1]) / 6} ${c[0] - (e[0] - b[0]) / 6} ${c[1] - (e[1] - b[1]) / 6} ${c[0]} ${c[1]}`;
  }
  return d;
}
const open = (pts) => `M${pts[0]}` + spline(pts);
const area = (a, b) => `M${a[0]}` + spline(a) + `L${b[0]}` + spline(b) + "Z";

const pearliteStart = [[841,255],[795,252],[721,250],[604,252],[522,256],[470,260],[422,268],[379,277],[346,286],[332,297],[328,307],[333,317],[346,325],[377,339],[423,354],[470,364],[530,369],[596,369],[661,369],[691,368]];
const pearliteEnd = [[846,262],[769,262],[702,264],[613,269],[533,279],[476,288],[437,299],[421,306],[417,313],[422,322],[448,330],[475,337],[526,346],[578,354],[623,361],[691,368]];
const pearliteTail = [[691,368],[726,370],[795,370],[849,369]];
const bainiteStart = [[395,346],[375,361],[364,377],[363,389],[377,397],[423,417],[487,439],[535,455],[569,468],[613,489],[668,520]];
const bainiteEnd = [[578,370],[568,373],[533,384],[517,397],[521,404],[535,410],[566,421],[604,433],[648,444],[690,458],[765,482],[830,506],[885,529]];
const sharedEdge = [[530,369],[470,364],[423,354],[395,346]];

add("rect", "plot", { x: left, y: top0, width: right - left, height: bottom - top0 });
add("path", "b-area", { d: `M${bainiteStart[0]}` + spline(bainiteStart) + `L${bainiteEnd[12]}` + spline([...bainiteEnd].reverse()) + `L${sharedEdge[0]}` + spline(sharedEdge) + "Z" });
add("path", "p-area", { d: area(pearliteStart, [...pearliteEnd].reverse()) });

let grid = "";
for (let t = 100; t <= 1200; t += 100) grid += `M${left} ${snap(yOf(t))}H${right}`;
for (let k = -1; k < 6; k++)
  for (let m = 2; m <= 10; m++) grid += `M${snap(xOf(m * 10 ** k) - 1)} ${top0}V${bottom}`;
add("path", "grid", { d: grid });

add("rect", "band", { x: left, y: yOf(770), width: right - left, height: yOf(740) - yOf(770) });
for (const t of [770, 740]) add("path", "ac", { d: `M${left} ${Math.round(yOf(t))}H${right}` });

add("path", "b-line", { d: open(bainiteStart) });
add("path", "b-line", { d: open(bainiteEnd) });
add("path", "b-line", { d: `M${left} 520H669` });
add("path", "p-line", { d: open(pearliteStart) });
add("path", "p-line", { d: open(pearliteEnd) });
add("path", "p-line", { d: open(pearliteTail) });
for (const [x, y] of [[702,264],[476,288],[417,312],[475,337],[623,361],[568,373],[517,397],[566,421],[690,458],[765,482],[830,506]])
  add("circle", "pt", { cx: x, cy: y, r: 3 });

// temperature axis
let ticks = `M${left - 0.5} ${top0}V${bottom}`;
for (let t = 0; t <= 1200; t += 100) {
  ticks += `M${left - 4} ${snap(yOf(t))}H${left}`;
  label("num end-t", left - 7, yOf(t) + 6, t);
}
// time axis in seconds
["0.1", "1", "10", "100", "1000", "1E4", "1E5", "1E6"].forEach((text, i) => {
  ticks += `M${snap(left - 1 + i * decade)} ${bottom}v5`;
  label("num mid-t", left + i * decade, 624, text);
});
// minute and hour axes
[1, 10, 100, 1000, 10000].forEach((m) => {
  ticks += `M${snap(xOf(m * 60) - 1)} 632v-5`;
  label("num mid-t", xOf(m * 60), 654, m);
});
[1, 2, 4, 6, 8, 16, 48, 72, 144].forEach((h) => {
  ticks += `M${snap(xOf(h * 3600) - 1)} 662v-5`;
  label("num mid-t", xOf(h * 3600), 684, h);
});
ticks += `M${left - 1} ${bottom + 0.5}H${right}M${xOf(60) - 1} 632.5H${right}M${xOf(3600) - 1} 662.5H${right}`;
add("path", "axis", { d: ticks });
label("unit", 489, 649, "Time [min]");
label("unit", 764, 679, "Time [h]");
add("text", "ytitle", { transform: "translate(15 313) rotate(-90)" }, "Temperature [ºC]");

label("ann", 529, 48, "Austenitisation:860°C");
label("ann", 114, 221, "Ac1e (770°C)");
label("ann", 114, 264, "Ac1b (740°C)");
label("ann", 268, 303, "A+C");
label("ann", 377, 314, "P");
label("ann", 453, 409, "B");
label("ann", 114, 513, "Ms");
label("ann", 990, 580, "Values in HRC");
[[26, 269], [30, 294], [40, 318], [42, 342], [36, 366]].forEach(([v, y]) => label("ann", 935, y, v));
[[35, 378], [39, 402], [46, 426], [51, 463], [56, 487], [60, 511]].forEach(([v, y]) => label("ann", 888, y, v));
```
